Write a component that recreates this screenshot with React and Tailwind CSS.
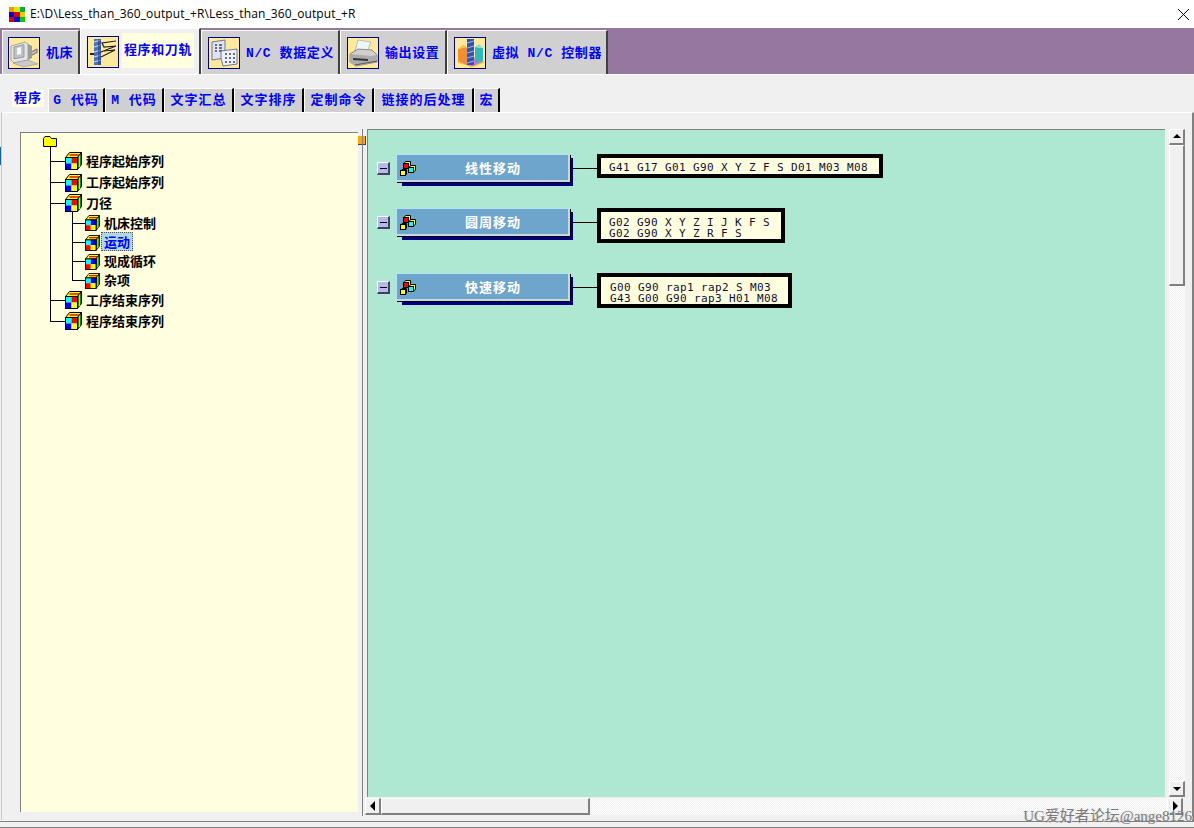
import React from 'react';

const cjk = "font-['Noto_Sans_CJK_SC',sans-serif]";
const monoCjk = "font-['Liberation_Mono','Noto_Sans_CJK_SC',monospace]";

// little drawings for the top tabs
const MachineIcon = () => (
  <svg viewBox="0 0 30 30" className="w-[30px] h-[30px]">
    <path d="M2 8 L16 4 L19 6 L19 22 L5 25 L2 22 Z" fill="#e4e4e4" stroke="#8a8a8a" strokeWidth="0.7" />
    <path d="M5 9 L15 6.5 L15 19 L5 21 Z" fill="#bcc4c8" stroke="#777" strokeWidth="0.6" />
    <path d="M8 10 L12 9 L12 16 L8 17 Z" fill="#f8f8f8" />
    <path d="M19 6 L23 8 L23 20 L19 22 Z" fill="#9b9b9b" />
    <path d="M23 14 L28 11 M23 17 L28 14 M28 11 L28 15" stroke="#8b8b8b" strokeWidth="1.5" fill="none" />
    <path d="M4 25 L19 22 L29 26 L14 29 Z" fill="#c9c9c9" stroke="#888" strokeWidth="0.5" />
  </svg>
);

const ToolpathIcon = () => (
  <svg viewBox="0 0 30 30" className="w-[30px] h-[30px]">
    <path d="M13 15 L28 9 L16 10 L14 6 L28 4" fill="none" stroke="#222" strokeWidth="1.2" />
    <path d="M13 20 L27 13 L16 14" fill="none" stroke="#222" strokeWidth="1.2" />
    <rect x="6" y="2" width="7" height="26" fill="#4a6fc0" />
    <path d="M6 5 L13 3 M6 10 L13 8 M6 15 L13 13 M6 20 L13 18 M6 25 L13 23" stroke="#c8d8f0" strokeWidth="1.2" />
    <rect x="2" y="16" width="4" height="2" fill="#222" />
    <rect x="10" y="2" width="3" height="26" fill="#2a3f80" opacity="0.6" />
  </svg>
);

const TableIcon = () => (
  <svg viewBox="0 0 30 30" className="w-[30px] h-[30px]">
    <path d="M3 4 L16 2 L16 20 L3 22 Z" fill="#dfe4f4" stroke="#4a5a90" strokeWidth="0.8" />
    <path d="M6 7h2M10 7h3M6 10h2M10 10h3M6 13h2M10 13h3" stroke="#445" strokeWidth="1.3" />
    <path d="M12 13 L28 11 L28 26 L14 28 Q11 20 12 13 Z" fill="#eef0fa" stroke="#4a5a90" strokeWidth="0.8" />
    <path d="M16 16h2M20 16h2M24 16h2M16 20h2M20 20h2M24 20h2M16 24h2M20 24h2M24 24h2" stroke="#445" strokeWidth="1.3" />
  </svg>
);

const PrinterIcon = () => (
  <svg viewBox="0 0 30 30" className="w-[30px] h-[30px]">
    <path d="M10 2 L23 4 L19 14 L7 13 Z" fill="#eef6fa" stroke="#9ab" strokeWidth="0.7" />
    <path d="M2 16 L10 11 L24 12 L29 17 L29 24 L8 28 L2 24 Z" fill="#d0d0d0" stroke="#666" strokeWidth="0.7" />
    <path d="M2 16 L23 18 L29 17 L29 24 L8 28 L2 24 Z" fill="#acacac" />
    <path d="M5 20 L20 21 L20 23 L5 22 Z" fill="#333" />
    <path d="M7 27 L29 23" stroke="#555" strokeWidth="1" />
  </svg>
);

const ChartIcon = () => (
  <svg viewBox="0 0 30 30" className="w-[30px] h-[30px]">
    <path d="M3 24 L17 29 L29 24 L17 19 Z" fill="#f070c0" stroke="#e8d020" strokeWidth="1" />
    <path d="M3 11 L3 23 L12 26 L12 9 Z" fill="#f09030" />
    <path d="M3 11 L8 7 L12 9 Z" fill="#f8c040" />
    <path d="M20 9 L28 10 L28 23 L20 26 Z" fill="#30b8c0" />
    <path d="M20 9 L24 6 L28 10 Z" fill="#80e0e0" />
    <rect x="12" y="1" width="7" height="26" fill="#3050c0" />
    <path d="M12 5 L19 3 M12 10 L19 8 M12 15 L19 13 M12 20 L19 18 M12 25 L19 23" stroke="#90b0f0" strokeWidth="1.3" />
  </svg>
);

const mainTabs = [
  { label: '机床', width: 'w-[78px]', pad: 'pl-[5px]', icon: <MachineIcon /> },
  { label: '程序和刀轨', width: 'w-[121px]', pad: 'pl-[6px]', icon: <ToolpathIcon />, active: true },
  { label: 'N/C 数据定义', width: 'w-[139px]', pad: 'pl-[6px]', icon: <TableIcon /> },
  { label: '输出设置', width: 'w-[107px]', pad: 'pl-[6px]', icon: <PrinterIcon /> },
  { label: '虚拟 N/C 控制器', width: 'w-[161px]', pad: 'pl-[6px]', icon: <ChartIcon /> },
];

const subTabs = [
  { label: '程序', width: 'w-[40px]', active: true },
  { label: 'G 代码', width: 'w-[57px]' },
  { label: 'M 代码', width: 'w-[59px]' },
  { label: '文字汇总', width: 'w-[70px]' },
  { label: '文字排序', width: 'w-[70px]' },
  { label: '定制命令', width: 'w-[70px]' },
  { label: '链接的后处理', width: 'w-[100px]' },
  { label: '宏', width: 'w-[26px]' },
];

const treeItems = [
  { label: '程序起始序列', height: 'h-[22px]' },
  { label: '工序起始序列', height: 'h-[21px]' },
  { label: '刀径', height: 'h-[20px]' },
  { label: '机床控制', height: 'h-[20px]', sub: true },
  { label: '运动', height: 'h-[19px]', sub: true, selected: true },
  { label: '现成循环', height: 'h-[19px]', sub: true },
  { label: '杂项', height: 'h-[19px]', sub: true },
  { label: '工序结束序列', height: 'h-[20px]' },
  { label: '程序结束序列', height: 'h-[22px]' },
];

const moves = [
  { label: '线性移动', height: 'h-[54px]', box: 'w-[286px] h-[24px] pl-[8px] pt-[2px]', lines: ['G41 G17 G01 G90 X Y Z F S D01 M03 M08'] },
  { label: '圆周移动', height: 'h-[65px]', box: 'w-[188px] h-[35px] pl-[8px] pt-[4px]', lines: ['G02 G90 X Y Z I J K F S', 'G02 G90 X Y Z R F S'] },
  { label: '快速移动', height: 'h-[60px]', box: 'w-[195px] h-[35px] pl-[9px] pt-[4px]', lines: ['G00 G90 rap1 rap2 S M03', 'G43 G00 G90 rap3 H01 M08'] },
];

// cube from the tree, the sub rows are smaller with the colours swapped
const Cube = ({ sub }) => (
  <svg viewBox="0 0 17 18" className={sub ? 'w-[15px] h-[16px] shrink-0' : 'w-[17px] h-[18px] shrink-0'}>
    <path d="M0.5 5.5 L4.5 0.5 L16.5 0.5 L12.5 5.5 Z" fill="#ffff00" stroke="#000" />
    <path d="M4.5 3 L16 3" stroke="#e00000" strokeWidth="1.4" />
    <path d="M12.5 5.5 L16.5 0.5 L16.5 12.5 L12.5 17.5 Z" fill="#008000" stroke="#000" />
    <path d="M14.5 3.5 L14.5 15" stroke="#e8e800" strokeWidth="1.2" />
    <rect x="0.5" y="5.5" width="6" height="6" fill="#00ffff" />
    <rect x="6.5" y="5.5" width="6" height="6" fill={sub ? '#0000ff' : '#ff0000'} />
    <rect x="0.5" y="11.5" width="6" height="6" fill={sub ? '#ff0000' : '#0000ff'} />
    <rect x="6.5" y="11.5" width="6" height="6" fill="#ffff00" />
    <rect x="0.5" y="5.5" width="12" height="12" fill="none" stroke="#000" />
  </svg>
);

const CubeCluster = () => (
  <svg viewBox="0 0 16 16" className="w-[16px] h-[16px] shrink-0">
    <path d="M3.5 4.5 L5.5 1.5 L10.5 1.5 L10.5 5.5 L8.5 8.5 L3.5 8.5 Z" fill="#ffff00" stroke="#000" />
    <rect x="3.5" y="3.5" width="5" height="5" fill="#ff0000" stroke="#000" />
    <path d="M8.5 8.5 L10.5 5.5 L15.5 5.5 L15.5 10 L13.5 12.5 L8.5 12.5 Z" fill="#ffff00" stroke="#000" />
    <rect x="8.5" y="7.5" width="5" height="5" fill="#00ffff" stroke="#000" />
    <path d="M0.5 11 L2 9.5 L6.5 9.5 L6.5 14 L5.5 15.5 L0.5 15.5 Z" fill="#00ffff" stroke="#000" />
    <rect x="0.5" y="10.5" width="5" height="5" fill="#ffff00" stroke="#000" />
  </svg>
);

const Arrow = ({ dir }) => {
  const points = {
    up: '1,6 5,2 9,6',
    down: '1,3 9,3 5,7',
    left: '7,0 7,10 2,5',
    right: '3,0 3,10 8,5',
  };
  return (
    <svg viewBox="0 0 10 10" className="w-[10px] h-[10px]">
      <polygon points={points[dir]} fill="#000" />
    </svg>
  );
};

const bevel = 'bg-[#f0f0f0] border-t border-l border-t-white border-l-white border-r-2 border-b-2 border-r-[#808080] border-b-[#808080]';
const dither = 'bg-[repeating-conic-gradient(#ffffff_0_25%,#eeeeee_0_50%)] bg-[length:2px_2px]';

const App = () => {
  return (
    <div className="relative w-[1194px] h-[828px] overflow-hidden bg-[#f0f0f0] flex flex-col">
      {/* Title bar */}
      <div className="h-[28px] bg-white flex items-center shrink-0">
        <div className="ml-[9px] w-[16px] h-[15px] grid grid-cols-3 grid-rows-3">
          <span className="bg-[#e8a000]" /><span className="bg-[#e8e000]" /><span className="bg-[#00b040]" />
          <span className="bg-[#0000e0]" /><span className="bg-[#e00000]" /><span className="bg-[#e0d000]" />
          <span className="bg-[#e00000]" /><span className="bg-[#0000e0]" /><span className="bg-[#00d000]" />
        </div>
        <span className="ml-[5px] text-[12px] tracking-[0.12px] text-black font-['Open_Sans',sans-serif]">
          {'E:\\D\\Less_than_360_output_+R\\Less_than_360_output_+R'}
        </span>
        <svg viewBox="0 0 10 10" className="w-[11px] h-[11px] ml-auto mr-[5px]">
          <path d="M0 0 L10 10 M10 0 L0 10" stroke="#000" strokeWidth="0.9" />
        </svg>
      </div>

      {/* Main tabs */}
      <div className="h-[46px] bg-[#9677a0] flex items-end pl-[2px] shrink-0">
        {mainTabs.map((tab) => (
          <div
            key={tab.label}
            className={`${tab.width} ${tab.pad} flex items-center shrink-0 border-t border-l border-white border-r-2 border-r-[#404040] ${
              tab.active ? 'h-[46px] bg-[#f0f0f0]' : 'h-[44px] bg-[#d0d0d0] pt-[1px]'
            }`}
          >
            <span className="w-[32px] h-[32px] shrink-0 flex items-center justify-center bg-[#ffe99a] border border-[#000080]">
              {tab.icon}
            </span>
            <span
              className={`${monoCjk} text-[13px] tracking-[0.6px] font-bold text-[#0000ff] whitespace-pre leading-none ${
                tab.active ? 'ml-[3px] bg-[#ffffe0] h-[35px] flex items-center px-[2px] mb-[2px]' : 'ml-[6px]'
              }`}
            >
              {tab.label}
            </span>
          </div>
        ))}
      </div>

      {/* Sub tabs */}
      <div className="h-[38px] flex items-end pl-[8px] shrink-0 border-t border-t-white">
        {subTabs.map((tab) => (
          <div
            key={tab.label}
            className={`${tab.width} h-[24px] flex items-center justify-center shrink-0 ${
              tab.active ? 'bg-[#f0f0f0] pb-[3px]' : 'bg-[#d0d0d0] border-t border-l border-white border-r-2 border-r-black'
            }`}
          >
            <span
              className={`${monoCjk} text-[13px] tracking-[1px] font-bold text-[#0000ff] whitespace-pre leading-none ${
                tab.active ? 'bg-[#ffffe0] h-[17px] px-[2px] flex items-center' : ''
              }`}
            >
              {tab.label}
            </span>
          </div>
        ))}
      </div>

      {/* Page body */}
      <div className="h-[710px] shrink-0 flex border-t border-t-white border-b border-b-[#808080] border-r-2 border-r-[#808080]">
        {/* Tree */}
        <div className="ml-[20px] mt-[19px] mb-[9px] w-[338px] bg-[#ffffe0] border-t border-l border-[#808080] relative shrink-0">
          <span className="absolute left-[29px] top-[14px] w-px h-[174px] bg-black" />
          <span className="absolute left-[51px] top-[78px] w-px h-[69px] bg-black" />
          <div className="pl-[22px] pt-[3px] h-[17px]">
            <svg viewBox="0 0 14 11" className="w-[14px] h-[11px] block">
              <path d="M0.5 10.5 L0.5 2.5 L2 0.5 L7 0.5 L8.5 2.5 L13.5 2.5 L13.5 10.5 Z" fill="#ffff00" stroke="#000" />
            </svg>
          </div>
          <div>
            {treeItems.map((item) => (
              <div key={item.label} className={`${item.height} flex items-center ${item.sub ? 'pl-[51px]' : 'pl-[29px]'}`}>
                <span className={`h-px bg-black shrink-0 ${item.sub ? 'w-[13px]' : 'w-[15px]'}`} />
                <Cube sub={item.sub} />
                <span
                  className={`${cjk} mb-[2px] text-[13px] font-bold leading-none whitespace-nowrap ${
                    item.selected
                      ? 'ml-[1px] text-[#0000ff] bg-[#add8e6] border border-dotted border-[#555] px-[2px] py-[2px]'
                      : 'ml-[4px] text-black'
                  }`}
                >
                  {item.label}
                </span>
              </div>
            ))}
          </div>
        </div>

        {/* Splitter */}
        <div className="w-[9px] shrink-0 relative">
          <span className="absolute left-0 top-[23px] w-[8px] h-[9px] bg-[#ffa500] border-b border-r border-[#404040]" />
          <span className="absolute left-[4px] top-[16px] bottom-[5px] w-px bg-[#808080]" />
        </div>

        {/* Diagram and scrollbars */}
        <div className="mt-[16px] flex-1 flex flex-col">
          <div className="flex h-[668px] shrink-0">
            <div className="w-[798px] shrink-0 bg-[#aee8d2] border-t border-l border-[#808080] pt-[24px] pl-[9px]">
              {moves.map((move) => (
                <div key={move.label} className={`${move.height} flex items-start`}>
                  <span className="mt-[8px] w-[13px] h-[13px] bg-[#b8b8ec] border-t border-l border-t-white border-l-white border-r-2 border-b-2 border-r-[#404060] border-b-[#404060] flex items-center justify-center shrink-0">
                    <span className="w-[7px] h-px bg-black" />
                  </span>
                  <div className="relative ml-[6px] w-[174px] h-[28px] shrink-0">
                    <span className="absolute left-[6px] top-[4px] -right-[3px] -bottom-[4px] bg-[#000080]" />
                    <div className="relative h-full bg-[#6ea5cc] border-t border-t-[#b4e4f4] border-l border-l-[#b4e4f4] border-r-2 border-r-[#c8d8e0] border-b-2 border-b-[#c8d8e0] flex items-center pl-[3px] shadow-[1px_1px_0_#000]">
                      <CubeCluster />
                      <span className={`${cjk} flex-1 text-center pl-[2px] text-[13px] tracking-[1px] font-bold text-white leading-none`}>
                        {move.label}
                      </span>
                    </div>
                  </div>
                  <span className="mt-[14px] w-[27px] h-px bg-black shrink-0" />
                  <div className={`${move.box} bg-[#ffffe0] border-4 border-black flex flex-col justify-center shrink-0`}>
                    {move.lines.map((line) => (
                      <div key={line} className="font-['DejaVu_Sans_Mono',monospace] text-[11px] tracking-[0.38px] leading-[11px] whitespace-pre text-[#101030]">
                        {line}
                      </div>
                    ))}
                  </div>
                </div>
              ))}
            </div>
            {/* Vertical scrollbar */}
            <div className={`ml-[4px] w-[16px] shrink-0 flex flex-col ${dither}`}>
              <div className={`h-[16px] flex items-center justify-center shrink-0 ${bevel}`}><Arrow dir="up" /></div>
              <div className={`h-[141px] shrink-0 ${bevel}`} />
              <div className={`h-[16px] mt-auto flex items-center justify-center shrink-0 ${bevel}`}><Arrow dir="down" /></div>
            </div>
          </div>
          {/* Horizontal scrollbar */}
          <div className="flex h-[17px] mt-px shrink-0">
            <div className={`w-[802px] -ml-[2px] shrink-0 flex ${dither}`}>
              <div className={`w-[16px] flex items-center justify-center shrink-0 ${bevel}`}><Arrow dir="left" /></div>
              <div className={`w-[209px] shrink-0 ${bevel}`} />
            </div>
            <div className={`w-[16px] shrink-0 flex items-center justify-center ${bevel}`}><Arrow dir="right" /></div>
          </div>
        </div>
      </div>

      {/* Window bottom edge */}
      <div className="h-[5px] shrink-0" />
      <div className="h-px bg-[#808080] shrink-0" />

      {/* Left window edge and the forum watermark over the corner */}
      <span className="absolute left-[1px] top-[112px] bottom-[8px] w-px bg-[#c8c8c8]" />
      <span className="absolute left-0 top-[147px] w-px h-[18px] bg-[#1a5fa0]" />
      <span className="absolute right-[2px] bottom-[4px] font-['Liberation_Serif','Noto_Sans_CJK_SC',serif] text-[15px] leading-none text-[#7a7a7a] [text-shadow:1px_0_0_#dddddd] whitespace-nowrap">
        UG爱好者论坛@ange8126
      </span>
    </div>
  );
};

export default App;
